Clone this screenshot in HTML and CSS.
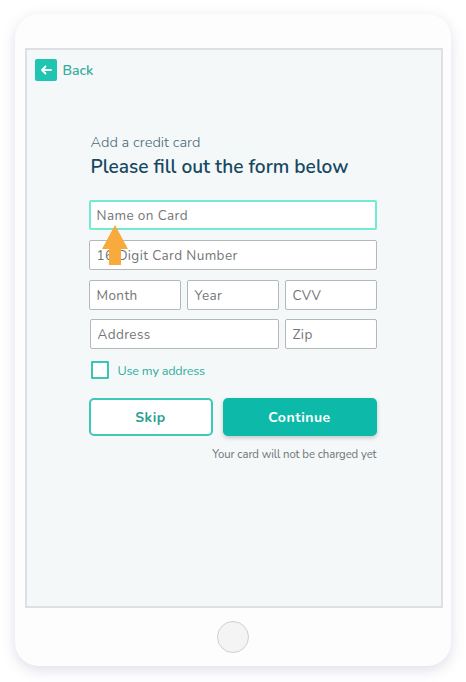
FILE: index.html
```html
<!DOCTYPE html>
<html>
<head>
<meta charset="utf-8">
<link rel="stylesheet" href="styles.css">
</head>
<body>
<div class="device">
  <div class="screen">
    <div class="back">
      <span class="back-icon">
        <svg width="12" height="10" viewBox="0 0 12 10"><path d="M11 5H2M5.5 1.5L2 5l3.5 3.5" fill="none" stroke="#fff" stroke-width="1.8" stroke-linecap="round" stroke-linejoin="round"/></svg>
      </span>
      <span class="back-text">Back</span>
    </div>
    <div class="form">
      <div class="sub">Add a credit card</div>
      <div class="title">Please fill out the form below</div>
      <div class="field focus">Name on Card</div>
      <div class="field">16 Digit Card Number</div>
      <div class="row three">
        <div class="field">Month</div>
        <div class="field">Year</div>
        <div class="field">CVV</div>
      </div>
      <div class="row two">
        <div class="field">Address</div>
        <div class="field">Zip</div>
      </div>
      <div class="check">
        <span class="box"></span>
        <span class="check-label">Use my address</span>
      </div>
      <div class="buttons">
        <div class="btn skip">Skip</div>
        <div class="btn cont">Continue</div>
      </div>
      <div class="note">Your card will not be charged yet</div>
      <svg class="arrow" width="28" height="41" viewBox="0 0 28 41"><path d="M14 0L27 24H20V40H8V24H1Z" fill="#f9aa3c"/></svg>
    </div>
  </div>
  <div class="home"></div>
</div>
</body>
</html>
```
FILE: styles.css
```css
html, body { margin: 0; padding: 0; background: #ffffff; }
body { width: 466px; height: 682px; overflow: hidden; font-family: "Nunito", "Lato", "Open Sans", sans-serif; }
.device {
  margin: 14px 0 0 15px;
  width: 436px;
  height: 652px;
  background: #fdfdfd;
  border-radius: 24px;
  box-shadow: 0 4px 14px rgba(110, 105, 160, 0.22);
  display: flex;
  flex-direction: column;
  align-items: center;
}
.screen {
  box-sizing: border-box;
  margin-top: 34px;
  margin-left: 1px;
  width: 418px;
  height: 560px;
  background: #f5f8f9;
  border: 2px solid #dedfe2;
  padding: 9px 0 0 8px;
}
.back { display: flex; align-items: center; gap: 6px; }
.back-icon {
  width: 22px; height: 22px; border-radius: 2px; background: #20c5b2;
  display: flex; align-items: center; justify-content: center;
}
.back-text { color: #35ad9f; font-size: 14px; font-weight: 600; }
.form { position: relative; margin: 51px 0 0 54px; width: 288px; display: flex; flex-direction: column; }
.sub { color: #48697a; font-size: 14.7px; font-weight: 300; margin-left: 2px; line-height: 20px; }
.title { color: #164862; font-size: 19.1px; font-weight: 600; margin: 2px 0 0 2px; line-height: 26px; }
.field {
  box-sizing: border-box;
  height: 30px;
  border: 1px solid #b5b8bb;
  border-radius: 2px;
  background: #fff;
  color: #737578;
  font-size: 13.5px;
  letter-spacing: 0.4px;
  padding-left: 7px;
  display: flex; align-items: center;
  margin-top: 10px;
}
.field.focus { border: 2px solid #74ead2; padding-left: 6px; margin-top: 20px; }
.row { display: grid; gap: 6px; margin-top: 10px; }
.row .field { margin-top: 0; }
.row.three { grid-template-columns: 92px 92px 1fr; }
.row.two { grid-template-columns: 189px 1fr; margin-top: 9px; padding-left: 1px; }
.check { display: flex; align-items: center; gap: 9px; margin: 12px 0 0 2px; }
.box { box-sizing: border-box; width: 18px; height: 18px; border: 2px solid #3ec4b4; border-radius: 1px; background: #fff; }
.check-label { color: #2bae9f; font-size: 12.6px; letter-spacing: -0.2px; }
.buttons { display: flex; gap: 10px; margin-top: 19px; }
.btn {
  box-sizing: border-box; height: 38px; border-radius: 5px;
  display: flex; align-items: center; justify-content: center;
  font-weight: 700; font-size: 14px; letter-spacing: 0.6px;
}
.skip { width: 124px; border: 2px solid #3ec8b8; color: #2a9f92; background: #fff; }
.cont { flex: 1; background: #0dbaaa; color: #fff; box-shadow: 0 2px 4px rgba(0,0,0,0.2); font-size: 14px; letter-spacing: 0.5px; }
.note { align-self: flex-end; color: #707274; font-size: 11.4px; margin-top: 10px; letter-spacing: -0.1px; }
.arrow { position: absolute; left: 12px; top: 93px; }
.home {
  margin-top: 13px;
  width: 30px; height: 30px; border-radius: 50%;
  background: #f4f4f4; border: 1px solid #d0d0d2;
}
```
